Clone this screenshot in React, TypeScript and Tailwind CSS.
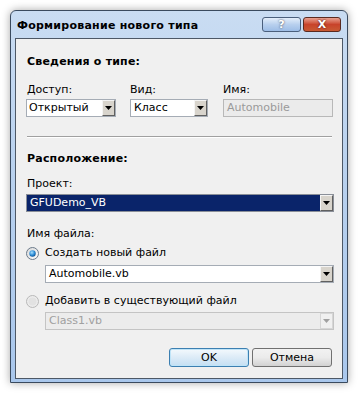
const Arrow = ({ disabled }: { disabled?: boolean }) => (
  <svg width="7" height="4" viewBox="0 0 7 4">
    <path d="M0 0h7L3.5 4z" fill={disabled ? "#a0a0a0" : "#000"} />
  </svg>
);

const DropButton = ({ disabled }: { disabled?: boolean }) =>
  disabled ? (
    <div className="flex h-[16px] w-[13px] items-center justify-center border border-[#d6d6d6] bg-[#f0f0f0]">
      <Arrow disabled />
    </div>
  ) : (
    <div className="flex h-[16px] w-[13px] items-center justify-center border border-t-[#f4f4f4] border-l-[#f4f4f4] border-b-[#606060] border-r-[#606060] bg-[#d8d4cc]">
      <Arrow />
    </div>
  );

const Label = ({ children, className = "" }: { children: React.ReactNode; className?: string }) => (
  <div className={`h-[14px] text-[11px] leading-[14px] text-black ${className}`}>{children}</div>
);

const Radio = ({ checked, disabled }: { checked?: boolean; disabled?: boolean }) => (
  <svg width="13" height="13" viewBox="0 0 13 13">
    <defs>
      <radialGradient id="rb" cx="0.4" cy="0.35" r="0.7">
        <stop offset="0" stopColor="#a8e0ff" />
        <stop offset="0.6" stopColor="#2a8ad4" />
        <stop offset="1" stopColor="#0b4d8c" />
      </radialGradient>
      <linearGradient id="rbg" x1="0" y1="0" x2="1" y2="1">
        <stop offset="0" stopColor="#d8d8d8" />
        <stop offset="1" stopColor="#ffffff" />
      </linearGradient>
    </defs>
    <circle cx="6.5" cy="6.5" r="6" fill={disabled ? "#ececec" : "url(#rbg)"} stroke={disabled ? "#b8b8b8" : "#6c7a8a"} />
    {checked && <circle cx="6.5" cy="6.5" r="3.2" fill="url(#rb)" />}
    {disabled && <circle cx="6.5" cy="6.5" r="4" fill="#e2e2e2" />}
  </svg>
);

export default function App() {
  return (
    <div className="h-[394px] w-[359px] bg-white pl-[10px] pt-[10px] font-['DejaVu_Sans',Verdana,sans-serif]">
      <div className="flex h-[373px] w-[338px] flex-col rounded-t-[6px] border border-[#3a4a5e] bg-gradient-to-b from-[#c9dcf2] via-[#b7d0ee] to-[#a9c7ec] shadow-[0_0_8px_rgba(0,0,0,0.35)]">
        {/* title bar */}
        <div className="flex h-[27px] items-start justify-between pl-[6px] pr-[6px]">
          <div className="pt-[8px] text-[11px] font-bold leading-[14px] tracking-[0.25px] text-black">Формирование нового типа</div>
          <div className="flex gap-[2px] pt-[6px]">
            <div className="flex h-[15px] w-[39px] items-center justify-center rounded-[3px] border border-[#4a5f7c] bg-gradient-to-b from-[#e4eefa] via-[#b8d0ee] to-[#9dbde6]">
              <span className="text-[11px] font-bold leading-[11px] text-white [text-shadow:0_0_2px_#334]">?</span>
            </div>
            <div className="flex h-[15px] w-[38px] items-center justify-center rounded-[3px] border border-[#5a2a20] bg-gradient-to-b from-[#e8a090] via-[#c8432b] to-[#c85a34]">
              <span className="text-[11px] font-bold leading-[11px] text-white [text-shadow:0_0_2px_#300]">X</span>
            </div>
          </div>
        </div>

        {/* client area */}
        <div className="mx-[4px] mb-[3px] flex-1 border border-[#4d5866] bg-[#f0f0f0] pl-[10px] pr-[8px] pt-[16px]">
          <Label className="ml-[1px] font-bold tracking-[0.2px]">Сведения о типе:</Label>
          <div className="mt-[14px] flex">
            <div className="w-[90px]">
              <Label className="ml-[1px]">Доступ:</Label>
              <div className="mt-[2px] flex h-[18px] items-center border border-[#a5acb5] bg-white pl-[2px]">
                <span className="flex-1 text-[11px] leading-[14px]">Открытый</span>
                <DropButton />
              </div>
            </div>
            <div className="ml-[14px] w-[78px]">
              <Label>Вид:</Label>
              <div className="mt-[2px] flex h-[18px] items-center border border-[#a5acb5] bg-white pl-[3px]">
                <span className="flex-1 text-[11px] leading-[14px]">Класс</span>
                <DropButton />
              </div>
            </div>
            <div className="ml-[15px] w-[110px]">
              <Label>Имя:</Label>
              <div className="mt-[2px] flex h-[18px] items-center border border-[#b8b8b8] bg-[#ebebeb] pl-[3px]">
                <span className="text-[11px] leading-[14px] text-[#9a9a9a]">Automobile</span>
              </div>
            </div>
          </div>
          <div className="ml-[1px] mr-[2px] mt-[19px] h-[2px] border-b border-t border-b-white border-t-[#a0a0a0]" />
          <Label className="ml-[1px] mt-[14px] font-bold tracking-[0.2px]">Расположение:</Label>
          <Label className="ml-[1px] mt-[11px]">Проект:</Label>
          <div className="mt-[3px] flex h-[18px] items-center border border-[#8a8f98] bg-[#0a246a] pl-[3px]">
            <span className="flex-1 text-[11px] leading-[14px] text-white">GFUDemo_VB</span>
            <DropButton />
          </div>
          <Label className="ml-[1px] mt-[15px]">Имя файла:</Label>
          <div className="mt-[5px] flex h-[14px] items-center gap-[6px]">
            <Radio checked />
            <span className="text-[11px] leading-[14px]">Создать новый файл</span>
          </div>
          <div className="ml-[19px] mt-[5px] flex h-[18px] items-center border border-[#a5acb5] bg-white pl-[3px]">
            <span className="flex-1 text-[11px] leading-[14px]">Automobile.vb</span>
            <DropButton />
          </div>
          <div className="mt-[11px] flex h-[14px] items-center gap-[6px]">
            <Radio disabled />
            <span className="text-[11px] leading-[14px]">Добавить в существующий файл</span>
          </div>
          <div className="ml-[19px] mt-[4px] flex h-[18px] items-center border border-[#c4c4c4] bg-[#ececec] pl-[3px]">
            <span className="flex-1 text-[11px] leading-[14px] text-[#a0a0a0]">Class1.vb</span>
            <DropButton disabled />
          </div>
          <div className="mr-[2px] mt-[18px] flex justify-end gap-[3px]">
            <button className="h-[19px] w-[80px] rounded-[3px] border border-[#3c7fb1] bg-gradient-to-b from-[#f4f9fd] via-[#dcebf7] to-[#c4dff3] text-[11px] leading-[14px] text-black shadow-[inset_0_0_0_1px_#bfe4f8]">
              OK
            </button>
            <button className="h-[19px] w-[80px] rounded-[3px] border border-[#707070] bg-gradient-to-b from-[#f2f2f2] via-[#ebebeb] to-[#d2d2d2] text-[11px] leading-[14px] text-black">
              Отмена
            </button>
          </div>
        </div>
      </div>
    </div>
  );
}
